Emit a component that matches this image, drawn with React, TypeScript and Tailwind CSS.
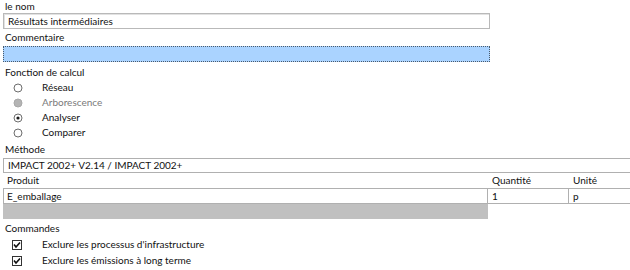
import React from "react";

const font = { fontFamily: 'Lato, "Open Sans", sans-serif' };

function Radio({ checked, disabled }: { checked?: boolean; disabled?: boolean }) {
  return (
    <svg width="10" height="10" viewBox="0 0 10 10" className="shrink-0">
      <circle
        cx="5"
        cy="5"
        r="4"
        fill={disabled ? "#b4b4b4" : "#f4f4f4"}
        stroke={disabled ? "#a8a8a8" : "#6e6e6e"}
        strokeWidth="1"
      />
      {!disabled && <circle cx="5" cy="5" r="3" fill="#fff" />}
      {checked && <circle cx="5" cy="5" r="1.6" fill="#1a1a1a" />}
    </svg>
  );
}

function Check() {
  return (
    <svg width="10" height="10" viewBox="0 0 10 10" className="shrink-0">
      <rect x="0.5" y="0.5" width="9" height="9" fill="#fff" stroke="#333" />
      <path d="M2 4.5 L4 7 L8 2.5" fill="none" stroke="#111" strokeWidth="1.6" />
    </svg>
  );
}

const radios = [
  { label: "Réseau" },
  { label: "Arborescence", disabled: true },
  { label: "Analyser", checked: true },
  { label: "Comparer" },
];

export default function App() {
  return (
    <div className="w-[630px] h-[270px] overflow-hidden bg-white text-[10px] text-[#111]" style={font}>
      <div className="h-[13px] pl-[5px] leading-[12px]">le nom</div>
      <div className="ml-[3px] w-[487px] h-[16px] border border-[#b9b9b9] shadow-[inset_1px_1px_0_#e2e2e2] pl-[4px] leading-[14px]">
        Résultats intermédiaires
      </div>
      <div className="h-[17px] pl-[5px] leading-[16px]">Commentaire</div>
      <div className="ml-[3px] w-[487px] h-[16px] bg-[#aad3ff] border border-dotted border-[#4a5a6a]" />
      <div className="h-[18px] pl-[5px] pt-[2px] leading-[16px]">Fonction de calcul</div>
      <div className="flex flex-col">
        {radios.map((r) => (
          <div key={r.label} className="h-[15px] flex items-center pl-[13px]">
            <Radio checked={r.checked} disabled={r.disabled} />
            <span className={`ml-[19px] ${r.disabled ? "text-[#7a7a7a]" : ""}`}>{r.label}</span>
          </div>
        ))}
      </div>
      <div className="h-[18px] pl-[5px] pt-[2px] leading-[14px]">Méthode</div>
      <div className="ml-[3px] h-[15px] border-y border-l border-[#b0b0b0] pl-[4px] leading-[13px]">
        IMPACT 2002+ V2.14 / IMPACT 2002+
      </div>
      <div className="ml-[3px] flex h-[16px] border-b border-[#b0b0b0] leading-[15px]">
        <div className="w-[485px] pl-[4px]">Produit</div>
        <div className="w-[81px] pl-[4px]">Quantité</div>
        <div className="flex-1 pl-[4px]">Unité</div>
      </div>
      <div className="ml-[3px] flex h-[15px] border-b border-l border-[#b0b0b0] leading-[14px]">
        <div className="w-[484px] pl-[3px] border-r border-[#b0b0b0]">E_emballage</div>
        <div className="w-[81px] pl-[4px] border-r border-[#b0b0b0]">1</div>
        <div className="flex-1 pl-[4px]">p</div>
      </div>
      <div className="ml-[3px] w-[485px] h-[15px] bg-[#c0c0c0]" />
      <div className="h-[17px] pl-[5px] pt-[2px] leading-[14px]">Commandes</div>
      <div className="flex flex-col">
        <div className="h-[16px] flex items-center pl-[12px] pt-[1px]">
          <Check />
          <span className="ml-[20px]">Exclure les processus d'infrastructure</span>
        </div>
        <div className="h-[16px] flex items-center pl-[12px] pt-[1px]">
          <Check />
          <span className="ml-[20px]">Exclure les émissions à long terme</span>
        </div>
      </div>
    </div>
  );
}
